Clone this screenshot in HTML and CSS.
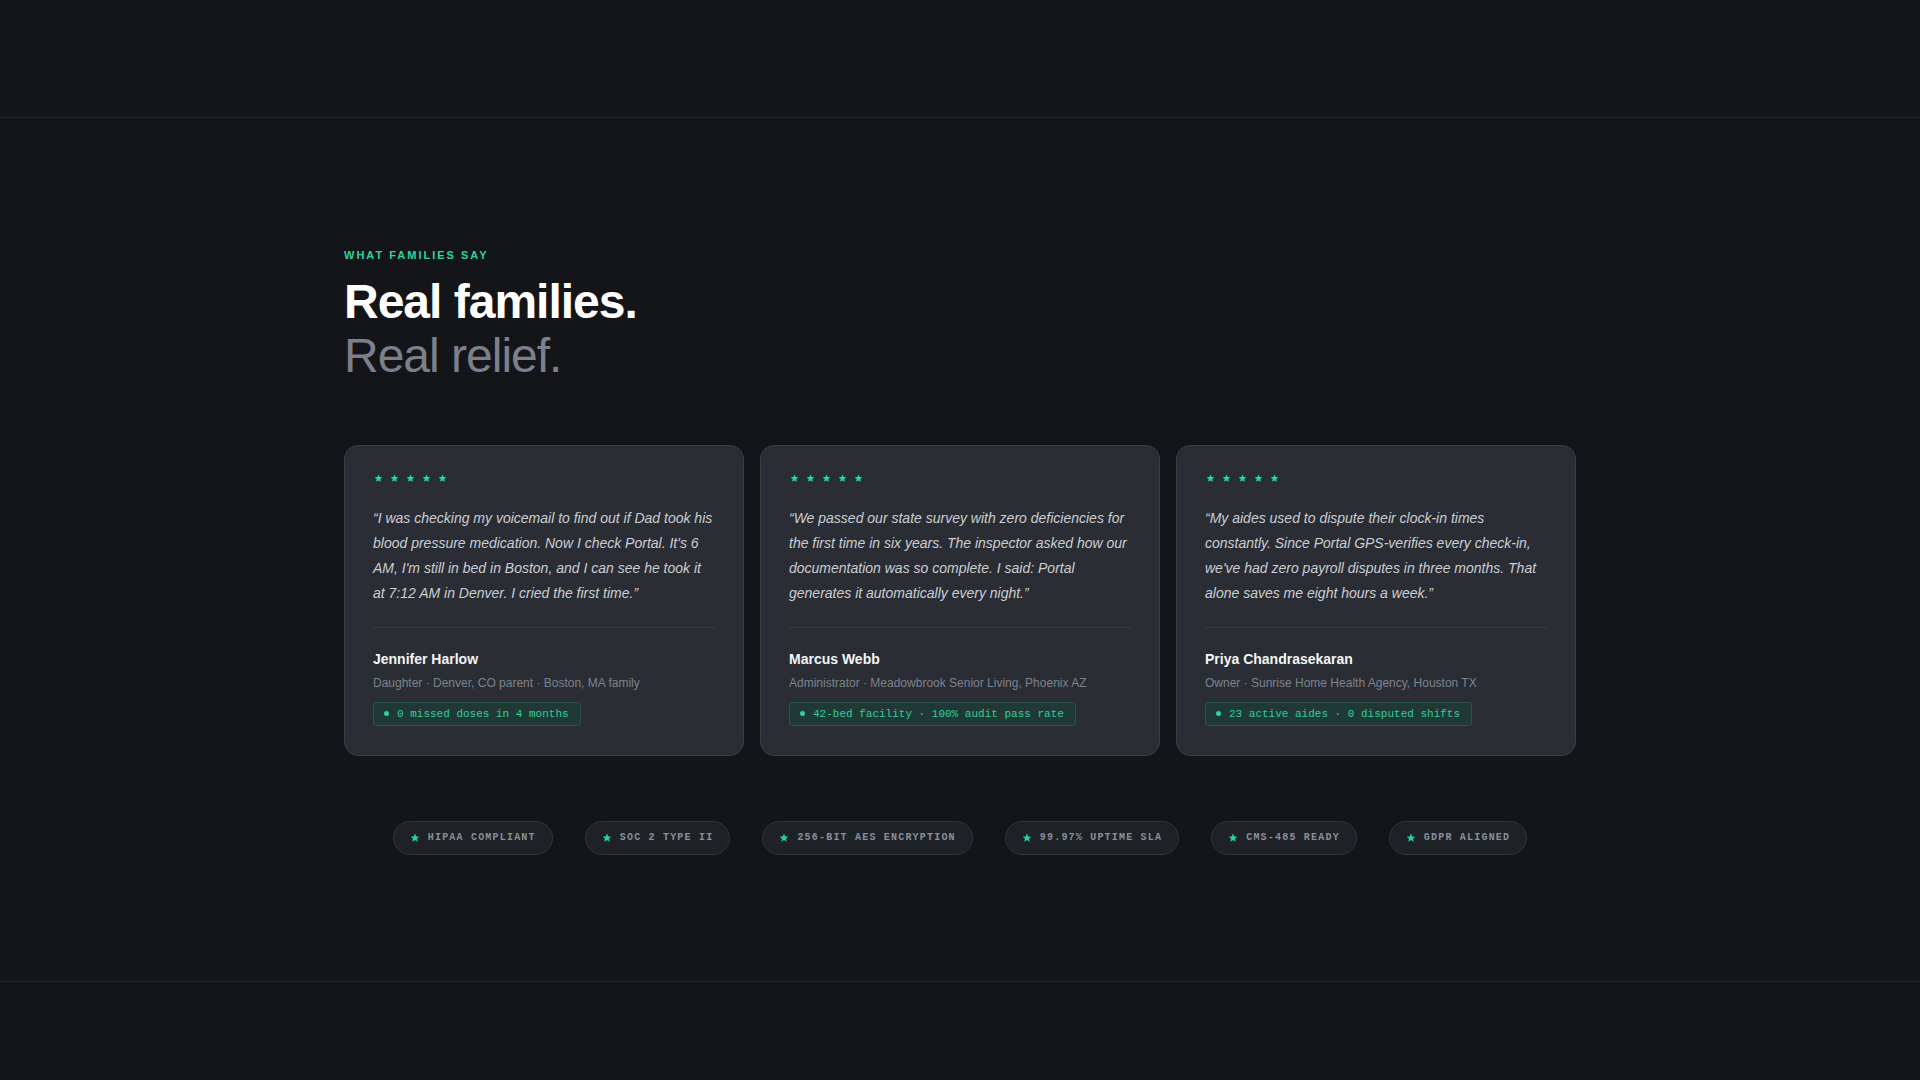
FILE: index.html
```html
<!DOCTYPE html>
<html lang="en">
<head>
    <meta charset="UTF-8">
    <meta name="viewport" content="width=device-width, initial-scale=1.0">
    <title>Portal - What families say</title>
    <link rel="stylesheet" href="styles.css">
</head>
<body>
    <header class="topbar"></header>

    <section class="testimonials">
        <div class="container">
            <p class="eyebrow">What families say</p>
            <h2 class="headline">Real families.<br><span class="muted">Real relief.</span></h2>

            <div class="cards">
                <article class="card">
                    <div class="stars">
                        <svg viewBox="0 0 10 10"><path d="M5 0.6l1.3 2.8 3 .3-2.3 2 .7 3-2.7-1.6-2.7 1.6.7-3-2.3-2 3-.3z"/></svg>
                        <svg viewBox="0 0 10 10"><path d="M5 0.6l1.3 2.8 3 .3-2.3 2 .7 3-2.7-1.6-2.7 1.6.7-3-2.3-2 3-.3z"/></svg>
                        <svg viewBox="0 0 10 10"><path d="M5 0.6l1.3 2.8 3 .3-2.3 2 .7 3-2.7-1.6-2.7 1.6.7-3-2.3-2 3-.3z"/></svg>
                        <svg viewBox="0 0 10 10"><path d="M5 0.6l1.3 2.8 3 .3-2.3 2 .7 3-2.7-1.6-2.7 1.6.7-3-2.3-2 3-.3z"/></svg>
                        <svg viewBox="0 0 10 10"><path d="M5 0.6l1.3 2.8 3 .3-2.3 2 .7 3-2.7-1.6-2.7 1.6.7-3-2.3-2 3-.3z"/></svg>
                    </div>
                    <blockquote class="quote">&ldquo;I was checking my voicemail to find out if Dad took his blood pressure medication. Now I check Portal. It's 6 AM, I'm still in bed in Boston, and I can see he took it at 7:12 AM in Denver. I cried the first time.&rdquo;</blockquote>
                    <div class="author">
                        <div class="name">Jennifer Harlow</div>
                        <div class="role">Daughter &middot; Denver, CO parent &middot; Boston, MA family</div>
                        <span class="tag"><i class="dot"></i>0 missed doses in 4 months</span>
                    </div>
                </article>

                <article class="card">
                    <div class="stars">
                        <svg viewBox="0 0 10 10"><path d="M5 0.6l1.3 2.8 3 .3-2.3 2 .7 3-2.7-1.6-2.7 1.6.7-3-2.3-2 3-.3z"/></svg>
                        <svg viewBox="0 0 10 10"><path d="M5 0.6l1.3 2.8 3 .3-2.3 2 .7 3-2.7-1.6-2.7 1.6.7-3-2.3-2 3-.3z"/></svg>
                        <svg viewBox="0 0 10 10"><path d="M5 0.6l1.3 2.8 3 .3-2.3 2 .7 3-2.7-1.6-2.7 1.6.7-3-2.3-2 3-.3z"/></svg>
                        <svg viewBox="0 0 10 10"><path d="M5 0.6l1.3 2.8 3 .3-2.3 2 .7 3-2.7-1.6-2.7 1.6.7-3-2.3-2 3-.3z"/></svg>
                        <svg viewBox="0 0 10 10"><path d="M5 0.6l1.3 2.8 3 .3-2.3 2 .7 3-2.7-1.6-2.7 1.6.7-3-2.3-2 3-.3z"/></svg>
                    </div>
                    <blockquote class="quote">&ldquo;We passed our state survey with zero deficiencies for the first time in six years. The inspector asked how our documentation was so complete. I said: Portal generates it automatically every night.&rdquo;</blockquote>
                    <div class="author">
                        <div class="name">Marcus Webb</div>
                        <div class="role">Administrator &middot; Meadowbrook Senior Living, Phoenix AZ</div>
                        <span class="tag"><i class="dot"></i>42-bed facility &middot; 100% audit pass rate</span>
                    </div>
                </article>

                <article class="card">
                    <div class="stars">
                        <svg viewBox="0 0 10 10"><path d="M5 0.6l1.3 2.8 3 .3-2.3 2 .7 3-2.7-1.6-2.7 1.6.7-3-2.3-2 3-.3z"/></svg>
                        <svg viewBox="0 0 10 10"><path d="M5 0.6l1.3 2.8 3 .3-2.3 2 .7 3-2.7-1.6-2.7 1.6.7-3-2.3-2 3-.3z"/></svg>
                        <svg viewBox="0 0 10 10"><path d="M5 0.6l1.3 2.8 3 .3-2.3 2 .7 3-2.7-1.6-2.7 1.6.7-3-2.3-2 3-.3z"/></svg>
                        <svg viewBox="0 0 10 10"><path d="M5 0.6l1.3 2.8 3 .3-2.3 2 .7 3-2.7-1.6-2.7 1.6.7-3-2.3-2 3-.3z"/></svg>
                        <svg viewBox="0 0 10 10"><path d="M5 0.6l1.3 2.8 3 .3-2.3 2 .7 3-2.7-1.6-2.7 1.6.7-3-2.3-2 3-.3z"/></svg>
                    </div>
                    <blockquote class="quote">&ldquo;My aides used to dispute their clock-in times constantly. Since Portal GPS-verifies every check-in, we've had zero payroll disputes in three months. That alone saves me eight hours a week.&rdquo;</blockquote>
                    <div class="author">
                        <div class="name">Priya Chandrasekaran</div>
                        <div class="role">Owner &middot; Sunrise Home Health Agency, Houston TX</div>
                        <span class="tag"><i class="dot"></i>23 active aides &middot; 0 disputed shifts</span>
                    </div>
                </article>
            </div>

            <ul class="badges">
                <li class="badge"><svg viewBox="0 0 10 10"><path d="M5 0.6l1.3 2.8 3 .3-2.3 2 .7 3-2.7-1.6-2.7 1.6.7-3-2.3-2 3-.3z"/></svg>HIPAA Compliant</li>
                <li class="badge"><svg viewBox="0 0 10 10"><path d="M5 0.6l1.3 2.8 3 .3-2.3 2 .7 3-2.7-1.6-2.7 1.6.7-3-2.3-2 3-.3z"/></svg>SOC 2 Type II</li>
                <li class="badge"><svg viewBox="0 0 10 10"><path d="M5 0.6l1.3 2.8 3 .3-2.3 2 .7 3-2.7-1.6-2.7 1.6.7-3-2.3-2 3-.3z"/></svg>256-bit AES Encryption</li>
                <li class="badge"><svg viewBox="0 0 10 10"><path d="M5 0.6l1.3 2.8 3 .3-2.3 2 .7 3-2.7-1.6-2.7 1.6.7-3-2.3-2 3-.3z"/></svg>99.97% Uptime SLA</li>
                <li class="badge"><svg viewBox="0 0 10 10"><path d="M5 0.6l1.3 2.8 3 .3-2.3 2 .7 3-2.7-1.6-2.7 1.6.7-3-2.3-2 3-.3z"/></svg>CMS-485 Ready</li>
                <li class="badge"><svg viewBox="0 0 10 10"><path d="M5 0.6l1.3 2.8 3 .3-2.3 2 .7 3-2.7-1.6-2.7 1.6.7-3-2.3-2 3-.3z"/></svg>GDPR Aligned</li>
            </ul>
        </div>
    </section>

    <footer class="bottombar"></footer>
</body>
</html>
```

FILE: styles.css
```css
* {
    box-sizing: border-box;
}
body {
    margin: 0;
    background-color: #131519;
    color: #f2f3f5;
    font-family: "Liberation Sans", Arial, sans-serif;
    min-height: 100vh;
}
.topbar {
    height: 118px;
    border-bottom: 1px solid #1f2227;
}
.testimonials {
    padding: 129px 0 126px;
    border-bottom: 1px solid #1f2227;
}
.container {
    max-width: 1232px;
    margin: 0 auto;
}
.eyebrow {
    margin: 0 0 12px;
    font-size: 11px;
    line-height: 16px;
    font-weight: bold;
    letter-spacing: 2px;
    text-transform: uppercase;
    color: #2dd4a0;
}
.headline {
    margin: 0 0 62px;
    font-size: 48px;
    line-height: 1.12;
    font-weight: bold;
    letter-spacing: -1px;
    color: #ffffff;
}
.headline .muted {
    font-weight: normal;
    color: #7c808c;
}
.cards {
    display: grid;
    grid-template-columns: repeat(3, 1fr);
    gap: 16px;
}
.card {
    background-color: #2a2d34;
    border: 1px solid #3a3e46;
    border-radius: 14px;
    padding: 28px 28px 29px;
}
.stars {
    display: flex;
    gap: 7px;
    height: 10px;
    align-items: center;
    padding-left: 1px;
}
.stars svg {
    width: 9px;
    height: 9px;
    fill: #22d39c;
}
.quote {
    margin: 22px 0 0;
    padding-bottom: 21px;
    border-bottom: 1px solid #363a42;
    font-size: 14px;
    line-height: 25px;
    font-style: italic;
    color: #cacdd3;
}
.author {
    padding-top: 21px;
}
.name {
    font-size: 14px;
    line-height: 20px;
    font-weight: bold;
    color: #f4f5f7;
}
.role {
    margin-top: 5px;
    font-size: 12px;
    line-height: 18px;
    color: #7e838d;
}
.tag {
    display: inline-flex;
    align-items: center;
    gap: 8px;
    margin-top: 10px;
    padding: 4px 11px 4px 10px;
    font-family: "Liberation Mono", monospace;
    font-size: 11px;
    line-height: 14px;
    color: #2fcf98;
    background-color: #1f3a36;
    border: 1px solid #2a5249;
    border-radius: 3px;
}
.tag .dot {
    width: 5px;
    height: 5px;
    border-radius: 50%;
    background-color: #2dd4a0;
}
.badges {
    list-style: none;
    margin: 65px 0 0;
    padding: 0;
    display: flex;
    justify-content: center;
    gap: 32px;
}
.badge {
    display: flex;
    align-items: center;
    gap: 8px;
    height: 34px;
    padding: 0 16px;
    font-family: "Liberation Mono", monospace;
    font-size: 10px;
    font-weight: bold;
    letter-spacing: 1.2px;
    text-transform: uppercase;
    color: #8a909b;
    background-color: #1e2126;
    border: 1px solid #30343b;
    border-radius: 17px;
}
.badge svg {
    width: 10px;
    height: 10px;
    fill: #22d39c;
}
.bottombar {
    height: 98px;
}
```
